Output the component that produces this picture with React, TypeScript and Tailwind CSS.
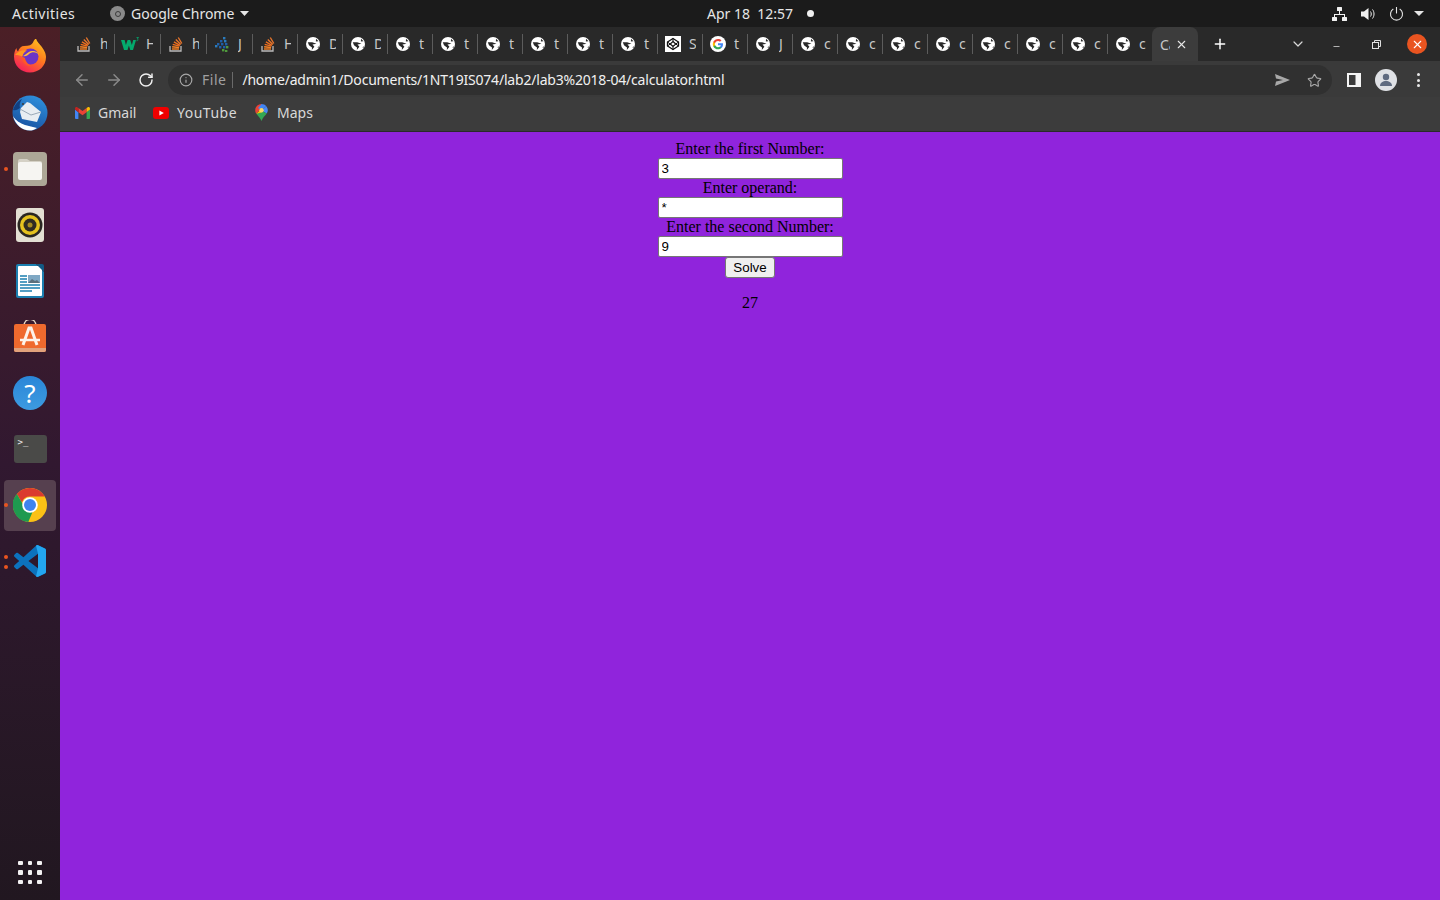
import React from "react";
import { ArrowLeft, ArrowRight, RotateCw, Info, Star, X, Plus, ChevronDown, Minus } from "lucide-react";

const uiFont = "font-['Noto_Sans','Open_Sans',sans-serif]";

// ---------- favicons ----------
function SoIcon() {
  return (
    <svg width="14" height="16" viewBox="0 0 14 16" fill="none">
      <path d="M1 10v5h11v-5" stroke="#bcbbbb" strokeWidth="1.300" />
      <path d="M3 13h7" stroke="#f48024" strokeWidth="1.400" />
      <path d="M3.100 10.800l7 .7" stroke="#f48024" strokeWidth="1.400" />
      <path d="M3.700 8.300l6.800 1.900" stroke="#ee6f20" strokeWidth="1.400" />
      <path d="M4.900 5.800l6.100 3.500" stroke="#ee6f20" strokeWidth="1.400" />
      <path d="M6.800 3.500l5 4.900" stroke="#e8752c" strokeWidth="1.400" />
      <path d="M9.300 1.500l3.500 6" stroke="#e8752c" strokeWidth="1.400" />
    </svg>
  );
}

function GlobeIcon() {
  return (
    <svg width="16" height="16" viewBox="0 0 16 16">
      <circle cx="8" cy="8" r="7" fill="#ffffff" />
      <path d="M2.800 6.300h4.400l4.300 1.500-4 .7 1.900 2.300-2.600 3.300 .2-2.700L4 9.300z" fill="#292929" />
      <path d="M11 2.800l2.500 2.400-2.600.2z" fill="#292929" />
      <path d="M12.500 11.500l1-1.500.2 2z" fill="#292929" />
    </svg>
  );
}

function W3Icon() {
  return (
    <svg width="18" height="14" viewBox="0 0 18 14">
      <path d="M0 3h3.600l1.300 5 1.700-5h2.600l1.700 5 1.300-5H15l-3 10H9.300L7.900 8.500 6.500 13H3z" fill="#04aa6d" />
      <path d="M15.500 .5h2L16.300 2c1 .2 1.200 1.800-.8 1.800" fill="none" stroke="#04aa6d" strokeWidth="0.800" />
    </svg>
  );
}

function DotsIcon() {
  const dots = [
    [9, 1, "#2b7bbd"], [6, 4, "#1f5fa8"], [10, 4, "#2b7bbd"], [3, 7, "#1f5fa8"], [7, 7, "#1f5fa8"], [11, 7, "#1f5fa8"],
    [1, 9, "#2b7bbd"], [5, 10, "#1f5fa8"], [9, 10, "#1f5fa8"], [12, 10, "#4f9a3c"], [8, 13, "#4f9a3c"], [11, 14, "#4f9a3c"],
  ] as const;
  return (
    <svg width="16" height="16" viewBox="0 0 16 16">
      {dots.map(([x, y, c], i) => (
        <rect key={i} x={x} y={y} width="2.400" height="2.400" fill={c} />
      ))}
    </svg>
  );
}

function CodepenIcon() {
  return (
    <svg width="16" height="16" viewBox="0 0 16 16">
      <rect width="16" height="16" fill="#ffffff" />
      <path d="M8 2.500 13.500 6v4L8 13.500 2.500 10V6z" fill="none" stroke="#111" strokeWidth="1.300" />
      <path d="M8 5.500 10.800 8 8 10.500 5.200 8z" fill="none" stroke="#111" strokeWidth="1.200" />
      <path d="M8 2.500v3M8 10.500v3M2.500 6l2.700 2M13.500 6l-2.700 2M2.500 10l2.700-2M13.500 10l-2.700-2" stroke="#111" strokeWidth="1" />
    </svg>
  );
}

function GoogleIcon() {
  return (
    <svg width="16" height="16" viewBox="0 0 48 48">
      <circle cx="24" cy="24" r="24" fill="#ffffff" />
      <path d="M39 24.600c0-1.100-.1-2.100-.3-3.100H24v5.900h8.500c-.4 2-1.500 3.600-3.100 4.700v3.900h5c2.900-2.700 4.600-6.700 4.600-11.400z" fill="#4285f4" />
      <path d="M24 40c4.200 0 7.700-1.400 10.400-3.800l-5-3.900c-1.400.9-3.200 1.500-5.400 1.500-4.100 0-7.500-2.800-8.800-6.500h-5.200v4C12.600 36.500 17.900 40 24 40z" fill="#34a853" />
      <path d="M15.200 27.800c-.3-1-.5-2-.5-3.100s.2-2.100.5-3.100v-4h-5.200C9 19.800 8.400 22.200 8.400 24.700s.6 4.900 1.600 7.100z" fill="#fbbc05" />
      <path d="M24 15.100c2.300 0 4.400.8 6 2.400l4.500-4.500C31.700 10.500 28.200 9 24 9c-6.100 0-11.400 3.500-14 8.600l5.200 4c1.300-3.700 4.700-6.500 8.800-6.500z" fill="#ea4335" />
    </svg>
  );
}

function GmailIcon() {
  return (
    <svg width="15" height="12" viewBox="0 0 15 12">
      <path d="M0 2.500V11a1 1 0 0 0 1 1h2.400V5.200z" fill="#4285f4" />
      <path d="M15 2.500V11a1 1 0 0 1-1 1h-2.400V5.200z" fill="#34a853" />
      <path d="M3.400 5.200 7.500 8.300l4.100-3.100V1L7.500 4.100 3.400 1z" fill="#ea4335" />
      <path d="M0 2.500 3.400 5.200V1L2.200.2C1.200-.4 0 .3 0 1.500z" fill="#c5221f" />
      <path d="M15 2.500 11.600 5.200V1l1.200-.8c1-.6 2.200.1 2.200 1.300z" fill="#fbbc04" />
    </svg>
  );
}

function YoutubeIcon() {
  return (
    <svg width="16" height="12" viewBox="0 0 16 12">
      <rect width="16" height="12" rx="3" fill="#f00000" />
      <path d="M6.400 3.400v5.200L10.800 6z" fill="#ffffff" />
    </svg>
  );
}

function MapsIcon() {
  return (
    <svg width="13" height="17" viewBox="0 0 13 17">
      <path d="M6.500 0A6.300 6.300 0 0 0 .2 6.300c0 1.400.5 2.500 1.200 3.500L6.500 3.500z" fill="#ea4335" />
      <path d="M6.500 0c1.900 0 3.600.9 4.800 2.200L6.500 6.500 3 4z" fill="#4285f4" />
      <path d="M11.300 2.200a6.300 6.300 0 0 1 .4 7.400L6.500 6.500z" fill="#4a8af4" />
      <path d="M1.400 9.800 6.500 6.500l5.200 3.100c-1.700 2.400-4 4-5.200 7.400-1-2.900-3.400-4.700-5.100-7.200z" fill="#34a853" />
      <path d="M1.400 9.800 6.500 4.500V8.500z" fill="#fbbc04" />
      <circle cx="6.500" cy="6.300" r="2.200" fill="#fdd663" />
    </svg>
  );
}

// ---------- dock icons ----------
function FirefoxIcon() {
  return (
    <svg width="36" height="36" viewBox="0 2 36 36">
      <defs>
        <linearGradient id="ff1" x1="0.8" y1="0" x2="0.2" y2="1">
          <stop offset="0" stopColor="#ffc51f" />
          <stop offset="0.45" stopColor="#ff7a1f" />
          <stop offset="1" stopColor="#f5185f" />
        </linearGradient>
      </defs>
      <path d="M24 1c.5 3.500 3 5 5.500 8.500 3.500 4.500 4.500 8 4.500 10.500 0 9-7.200 15.500-16 15.500S2 29 2 19.500C2 16.500 2.800 13 4.500 11c0 1.500.5 2.600 1.500 3.500C7 11 9.500 9 12 9c5 0 8-1 9-3.500.5-1.500 1.500-3 3-4.500z" fill="url(#ff1)" />
      <circle cx="18.500" cy="19.500" r="8" fill="#6a35c7" />
      <path d="M11 19c3-1.500 5-4.500 9-5 4 0 6.500 2 7 4-2-3.500-7.500-3.500-10-1-1 1-3.500 3-6 2z" fill="#ffbd3d" />
      <path d="M3 18c3-4 7-5.500 12-4.500-3 1.500-4 4-5 6-2-1.500-4.500-1.500-7-1.500z" fill="#ff9a1f" />
      <path d="M10 19.500c0 6 5 10.500 10 9.500-3-1-6.500-4-7-8z" fill="#ff5a24" />
    </svg>
  );
}

function ThunderbirdIcon() {
  return (
    <svg width="36" height="36" viewBox="0 0 36 36">
      <defs>
        <linearGradient id="tb1" x1="0.7" y1="0" x2="0.3" y2="1">
          <stop offset="0" stopColor="#2e8fdc" />
          <stop offset="1" stopColor="#184f9e" />
        </linearGradient>
      </defs>
      <circle cx="18" cy="18" r="17.500" fill="url(#tb1)" />
      <path d="M1 21c3 5 7 7 12 9l12 3c-3 2-5 2.500-7 2.500-8 0-15-6-17-14.500z" fill="#ffffff" />
      <path d="M9 13l6-6 3 1 11 9-4 10-15-3-2-7z" fill="#e8edf2" />
      <path d="M8 14l11 6 10-3" fill="none" stroke="#9aa9b8" strokeWidth="1" />
      <path d="M1 15c2-6 5-9 9-11-2 3-3 6-2 9-2 1-4 3-7 2z" fill="#123f80" />
      <circle cx="11" cy="9" r="1" fill="#3b3b3b" />
    </svg>
  );
}

function FilesIcon() {
  return (
    <svg width="34" height="34" viewBox="0 0 34 34">
      <rect width="34" height="34" rx="4" fill="#ada797" />
      <path d="M5 9a2 2 0 0 1 2-2h7l3 2h10a2 2 0 0 1 2 2v2H5z" fill="#d5d1c6" />
      <rect x="5" y="10" width="24" height="18" rx="2" fill="#f6f5f2" />
    </svg>
  );
}

function RhythmboxIcon() {
  return (
    <svg width="28" height="34" viewBox="0 0 28 34">
      <rect width="28" height="34" rx="3" fill="#e3dfd3" />
      <circle cx="14" cy="17" r="12.500" fill="#2a2722" />
      <circle cx="14" cy="17" r="10" fill="#e5c21f" />
      <circle cx="14" cy="17" r="6.500" fill="#2f2b22" />
      <circle cx="14" cy="17" r="2.500" fill="#a58a22" />
    </svg>
  );
}

function WriterIcon() {
  return (
    <svg width="28" height="34" viewBox="0 0 28 34">
      <path d="M2 0h18l8 8v24a2 2 0 0 1-2 2H2a2 2 0 0 1-2-2V2a2 2 0 0 1 2-2z" fill="#1b7fb0" />
      <rect x="2" y="2" width="24" height="30" rx="1" fill="#ffffff" />
      <path d="M20 0h6a2 2 0 0 1 2 2v6z" fill="#125a85" />
      <path d="M4 12h7M4 15h7M4 18h7M4 21h20M4 24h20M4 27h12" stroke="#1b7fb0" strokeWidth="1.500" />
      <rect x="12" y="11" width="12" height="8" fill="#7fa8c4" />
      <path d="M12 19l4-4 3 2 2-1 3 3z" fill="#5c6f7c" />
    </svg>
  );
}

function SoftwareIcon() {
  return (
    <svg width="34" height="34" viewBox="0 1 34 34">
      <path d="M11 7c0-9 12-9 12 0" fill="none" stroke="#e9d8c5" strokeWidth="1.500" />
      <path d="M3 5h28a2 2 0 0 1 2 2v24a2 2 0 0 1-2 2H3a2 2 0 0 1-2-2V7a2 2 0 0 1 2-2z" fill="#ef6a2e" />
      <path d="M10 26l6-17h2l6 17" fill="none" stroke="#fdf3ea" strokeWidth="3" />
      <path d="M7 21h20" stroke="#fdf3ea" strokeWidth="2.500" />
      <path d="M1 29h32v2a2 2 0 0 1-2 2H3a2 2 0 0 1-2-2z" fill="#e2a27c" />
    </svg>
  );
}

function ChromeIcon({ size = 34 }: { size?: number }) {
  return (
    <svg width={size} height={size} viewBox="0 0 48 48">
      <circle cx="24" cy="24" r="24" fill="#fbc116" />
      <path d="M24 0a24 24 0 0 1 20.800 12H24a12 12 0 0 0-11.400 8.300L5.500 8.400A24 24 0 0 1 24 0z" fill="#db3a2f" />
      <path d="M5.500 8.400 15 24.600a12 12 0 0 0 14 5.900L21.600 47.900A24 24 0 0 1 5.500 8.400z" fill="#1e9a4f" />
      <circle cx="24" cy="24" r="11" fill="#ffffff" />
      <circle cx="24" cy="24" r="8.500" fill="#3f83ee" />
    </svg>
  );
}

function VscodeIcon() {
  return (
    <svg width="32" height="32" viewBox="0 0 100 100">
      <path
        fillRule="evenodd"
        clipRule="evenodd"
        d="M70.9 99.300C72.500 99.900 74.300 99.900 75.900 99.100L96.500 89.200C98.600 88.200 100 86 100 83.600V16.400C100 14 98.600 11.800 96.500 10.800L75.900 .9C73.800-.1 71.300.1 69.500 1.400 69.300 1.600 69 1.800 68.800 2.100L29.400 38 12.200 25C10.600 23.800 8.400 23.900 6.900 25.200L1.400 30.300C-.5 31.900-.5 34.800 1.400 36.400L16.200 50 1.400 63.600C-.5 65.200-.5 68.100 1.400 69.700L6.900 74.800C8.400 76.100 10.600 76.200 12.200 75L29.400 62 68.800 97.900C69.400 98.500 70.100 99 70.900 99.300ZM75 27.300 45.100 50 75 72.700V27.300Z"
        fill="#0c72bd"
      />
      <path d="M75 .6 96.500 10.800C98.600 11.800 100 14 100 16.400V83.600C100 86 98.600 88.200 96.500 89.200L75 99.400C72.800 100.200 70.500 99.600 68.800 97.900L75 72.700V27.300L68.800 2.100C70.500.4 72.800-.2 75 .6Z" fill="#23a6f0" />
    </svg>
  );
}

function DockItem({ children, dots = 0, active = false }: { children: React.ReactNode; dots?: number; active?: boolean }) {
  return (
    <div className="relative flex h-[56px] w-[60px] items-center justify-center">
      {active && <div className="absolute left-[4px] top-[3px] h-[51px] w-[52px] rounded-[4px] bg-[#56404f]" />}
      {dots === 1 && <div className="absolute left-[4px] top-[26px] h-[4px] w-[4px] rounded-full bg-[#e95420]" />}
      {dots === 2 && (
        <>
          <div className="absolute left-[4px] top-[22px] h-[4px] w-[4px] rounded-full bg-[#e95420]" />
          <div className="absolute left-[4px] top-[32px] h-[4px] w-[4px] rounded-full bg-[#e95420]" />
        </>
      )}
      <div className="relative flex items-center justify-center">{children}</div>
    </div>
  );
}

function Dock() {
  return (
    <aside className="flex h-[873px] w-[60px] shrink-0 flex-col bg-gradient-to-b from-[#4b1f26] via-[#311830] to-[#211720] pt-[2px]">
      <DockItem><FirefoxIcon /></DockItem>
      <DockItem><ThunderbirdIcon /></DockItem>
      <DockItem dots={1}><FilesIcon /></DockItem>
      <DockItem><RhythmboxIcon /></DockItem>
      <DockItem><WriterIcon /></DockItem>
      <DockItem><SoftwareIcon /></DockItem>
      <DockItem>
        <div className="flex h-[34px] w-[34px] items-center justify-center rounded-full bg-gradient-to-b from-[#2a86d8] to-[#3d9be0] font-['Noto_Sans',sans-serif] text-[26px] leading-none text-white">?</div>
      </DockItem>
      <DockItem>
        <div className="h-[28px] w-[33px] rounded-[3px] bg-[#4a4a48] pl-[4px] pt-[1px] font-['DejaVu_Sans_Mono',monospace] text-[9px] leading-[12px] text-[#eeeeee]">&gt;_</div>
      </DockItem>
      <DockItem dots={1} active><ChromeIcon /></DockItem>
      <DockItem dots={2}><VscodeIcon /></DockItem>
      <div className="mt-auto mb-[16px] grid w-[24px] grid-cols-3 gap-[5px] self-center">
        {Array.from({ length: 9 }).map((_, i) => (
          <div key={i} className="h-[4.500px] w-[4.500px] rounded-[1px] bg-[#f3f1f2]" />
        ))}
      </div>
    </aside>
  );
}

// ---------- top bar ----------
function TopBar() {
  return (
    <header className={`flex h-[27px] items-center bg-[#1b1b1b] text-[14px] text-[#e6e6e6] ${uiFont}`}>
      <span className="ml-[12px] w-[63px] whitespace-nowrap tracking-[0.5px]">Activities</span>
      <div className="ml-[35px] flex h-[15px] w-[15px] items-center justify-center rounded-full bg-[#8a8a8a]">
        <div className="h-[6px] w-[6px] rounded-full border border-[#3a3a3a]" />
      </div>
      <span className="ml-[6px] w-[104px] whitespace-nowrap">Google Chrome</span>
      <svg className="ml-[5px]" width="9" height="5" viewBox="0 0 9 5"><path d="M0 0h9L4.500 5z" fill="#e6e6e6" /></svg>
      <span className="ml-[458px] w-[87px] whitespace-pre">Apr 18  12:57</span>
      <div className="ml-[13px] h-[7px] w-[7px] rounded-full bg-[#f0f0f0]" />
      <svg className="ml-[518px]" width="15" height="14" viewBox="0 0 15 14" fill="#f0f0f0">
        <rect x="5" y="0" width="5" height="4" rx="0.500" />
        <rect x="0" y="10" width="5" height="4" rx="0.500" />
        <rect x="10" y="10" width="5" height="4" rx="0.500" />
        <path d="M7 4h1v3h5v3h-1V8H3v2H2V7h5z" />
      </svg>
      <svg className="ml-[14px]" width="15" height="14" viewBox="0 0 15 14">
        <path d="M0 4.500h3L7.500 1v12L3 9.500H0z" fill="#f0f0f0" />
        <path d="M9.500 4.500c1 1.500 1 3.500 0 5M11.500 2.500c2 2.500 2 6.500 0 9" fill="none" stroke="#f0f0f0" strokeWidth="1" />
      </svg>
      <svg className="ml-[13px]" width="15" height="14" viewBox="0 0 15 14" fill="none" stroke="#e6e6e6" strokeWidth="1.100">
        <path d="M7.500 0v6.500" />
        <path d="M4.300 2A6 6 0 1 0 10.700 2" />
      </svg>
      <svg className="ml-[10px]" width="10" height="5" viewBox="0 0 10 5"><path d="M0 0h10L5 5z" fill="#e6e6e6" /></svg>
    </header>
  );
}

// ---------- tabs ----------
type TabDef = { icon: React.ReactNode; letter: string; wide?: boolean };

const tabs: TabDef[] = [
  { icon: <SoIcon />, letter: "h", wide: true },
  { icon: <W3Icon />, letter: "H", wide: true },
  { icon: <SoIcon />, letter: "h", wide: true },
  { icon: <DotsIcon />, letter: "J", wide: true },
  { icon: <SoIcon />, letter: "H" },
  { icon: <GlobeIcon />, letter: "D" },
  { icon: <GlobeIcon />, letter: "D" },
  { icon: <GlobeIcon />, letter: "t" },
  { icon: <GlobeIcon />, letter: "t" },
  { icon: <GlobeIcon />, letter: "t" },
  { icon: <GlobeIcon />, letter: "t" },
  { icon: <GlobeIcon />, letter: "t" },
  { icon: <GlobeIcon />, letter: "t" },
  { icon: <CodepenIcon />, letter: "S" },
  { icon: <GoogleIcon />, letter: "t" },
  { icon: <GlobeIcon />, letter: "J" },
  { icon: <GlobeIcon />, letter: "c" },
  { icon: <GlobeIcon />, letter: "c" },
  { icon: <GlobeIcon />, letter: "c" },
  { icon: <GlobeIcon />, letter: "c" },
  { icon: <GlobeIcon />, letter: "c" },
  { icon: <GlobeIcon />, letter: "c" },
  { icon: <GlobeIcon />, letter: "c" },
  { icon: <GlobeIcon />, letter: "c" },
];

function Tab({ tab, last }: { tab: TabDef; last: boolean }) {
  return (
    <div className={`flex h-[20px] shrink-0 items-center ${tab.wide ? "w-[46px]" : last ? "w-[44px]" : "w-[45px]"} ${last ? "" : "border-r border-[#5c5c5c]"}`}>
      <div className="ml-[6px] flex w-[18px] justify-center">{tab.icon}</div>
      <span className="ml-[7px] w-[7px] overflow-hidden text-[14px] leading-[20px] text-[#c8c8c8]">{tab.letter}</span>
    </div>
  );
}

function TabStrip() {
  return (
    <div className={`flex h-[34px] items-center bg-[#292929] pl-[9px] ${uiFont}`}>
      {tabs.map((tab, i) => (
        <Tab key={i} tab={tab} last={i === tabs.length - 1} />
      ))}
      <div className="flex h-[34px] w-[46px] shrink-0 items-center self-end rounded-t-[8px] bg-[#3c3c3c] pl-[8px]">
        <span className="w-[10px] overflow-hidden text-[14px] text-[#c8c8c8]">Ca</span>
        <X className="ml-[5px] text-[#e8e8e8]" size={13} strokeWidth={2} />
      </div>
      <Plus className="ml-[14px] text-white" size={16} strokeWidth={2.200} />
      <ChevronDown className="ml-[62px] text-[#d8d8d8]" size={16} strokeWidth={1.800} />
      <Minus className="ml-[26px] mt-[4px] text-[#e0e0e0]" size={9} strokeWidth={2} />
      <svg className="ml-[31px]" width="9" height="9" viewBox="0 0 9 9" fill="none" stroke="#e0e0e0" strokeWidth="1">
        <rect x="0.500" y="2.500" width="6" height="6" />
        <path d="M2.500 2.500V0.500h6v6H6.500" />
      </svg>
      <div className="ml-[26px] flex h-[20px] w-[20px] items-center justify-center rounded-full bg-[#e95420]">
        <X className="text-white" size={13} strokeWidth={2} />
      </div>
    </div>
  );
}

function Toolbar() {
  return (
    <div className={`flex h-[36px] items-center bg-[#3a3a3a] pt-[2px] ${uiFont}`}>
      <ArrowLeft className="ml-[13px] text-[#8a8a8a]" size={18} strokeWidth={2} />
      <ArrowRight className="ml-[14px] text-[#8a8a8a]" size={18} strokeWidth={2} />
      <RotateCw className="ml-[15px] text-[#f0f0f0]" size={16} strokeWidth={2.200} />
      <div className="ml-[14px] flex h-[30px] w-[1164px] items-center rounded-full bg-[#303030]">
        <Info className="ml-[11px] text-[#a8a8a8]" size={14} strokeWidth={2} />
        <span className="ml-[9px] mb-[1px] text-[14px] tracking-[0.5px] text-[#a0a0a0]">File</span>
        <div className="ml-[6px] h-[16px] w-px bg-[#6a6a6a]" />
        <span className="ml-[9px] mb-[1px] whitespace-nowrap text-[14px] tracking-[-0.2px] text-[#f0f0f0]">/home/admin1/Documents/1NT19IS074/lab2/lab3%2018-04/calculator.html</span>
        <div className="ml-auto mr-[10px] flex items-center gap-[17px]">
          <svg width="15" height="12" viewBox="0 0 15 12"><path d="M0 0l15 6L0 12l1-4.500L8 6 1 4.500z" fill="#a8a8a8" /></svg>
          <Star className="text-[#a8a8a8]" size={15} strokeWidth={1.800} />
        </div>
      </div>
      <svg className="ml-[15px]" width="14" height="14" viewBox="0 0 14 14">
        <rect width="14" height="14" fill="#f4f4f4" />
        <rect x="2" y="2" width="6.500" height="10" fill="#3a3a3a" />
      </svg>
      <div className="ml-[14px] flex h-[22px] w-[22px] items-center justify-center rounded-full bg-[#dfe1e5]">
        <svg width="14" height="14" viewBox="0 0 14 14" fill="#5f6b80">
          <circle cx="7" cy="4" r="3.200" />
          <path d="M1 13c0-3.500 3-5 6-5s6 1.500 6 5z" />
        </svg>
      </div>
      <div className="ml-[20px] flex flex-col gap-[2.500px]">
        <div className="h-[3px] w-[3px] rounded-full bg-[#e8e8e8]" />
        <div className="h-[3px] w-[3px] rounded-full bg-[#e8e8e8]" />
        <div className="h-[3px] w-[3px] rounded-full bg-[#e8e8e8]" />
      </div>
    </div>
  );
}

function Bookmarks() {
  return (
    <div className={`flex h-[35px] items-center border-b border-[#2a2a2a] bg-[#3c3c3c] pb-[3px] text-[14px] text-[#d8d8d8] ${uiFont}`}>
      <div className="ml-[15px]"><GmailIcon /></div>
      <span className="ml-[8px] mb-[1px] w-[39px]">Gmail</span>
      <div className="ml-[16px]"><YoutubeIcon /></div>
      <span className="ml-[8px] mb-[1px] w-[60px] tracking-[0.5px]">YouTube</span>
      <div className="ml-[18px]"><MapsIcon /></div>
      <span className="ml-[9px] mb-[1px]">Maps</span>
    </div>
  );
}

// ---------- the page in the browser ----------
function CalcInput({ value }: { value: string }) {
  return (
    <input
      readOnly
      defaultValue={value}
      className="h-[21px] w-[185px] rounded-[2px] border border-[#767676] bg-white px-[3px] font-['Liberation_Sans',sans-serif] text-[13.333px] text-black outline-none"
    />
  );
}

function Calculator() {
  return (
    <main className="flex-1 bg-[#9024dc] pt-[8px] font-['Liberation_Serif',serif] text-[16px] leading-[18px] text-black">
      <form className="flex flex-col items-center">
        <label>Enter the first Number:</label>
        <CalcInput value="3" />
        <label>Enter operand:</label>
        <CalcInput value="*" />
        <label>Enter the second Number:</label>
        <CalcInput value="9" />
        <button type="button" className="h-[21px] w-[50px] rounded-[3px] border border-[#767676] bg-[#efefef] font-['Liberation_Sans',sans-serif] text-[13.333px] leading-none text-black">
          Solve
        </button>
        <p className="mt-[16px]">27</p>
      </form>
    </main>
  );
}

export default function App() {
  return (
    <div className="flex h-[900px] w-[1440px] flex-col overflow-hidden">
      <TopBar />
      <div className="flex flex-1">
        <Dock />
        <div className="flex flex-1 flex-col">
          <TabStrip />
          <Toolbar />
          <Bookmarks />
          <Calculator />
        </div>
      </div>
    </div>
  );
}
